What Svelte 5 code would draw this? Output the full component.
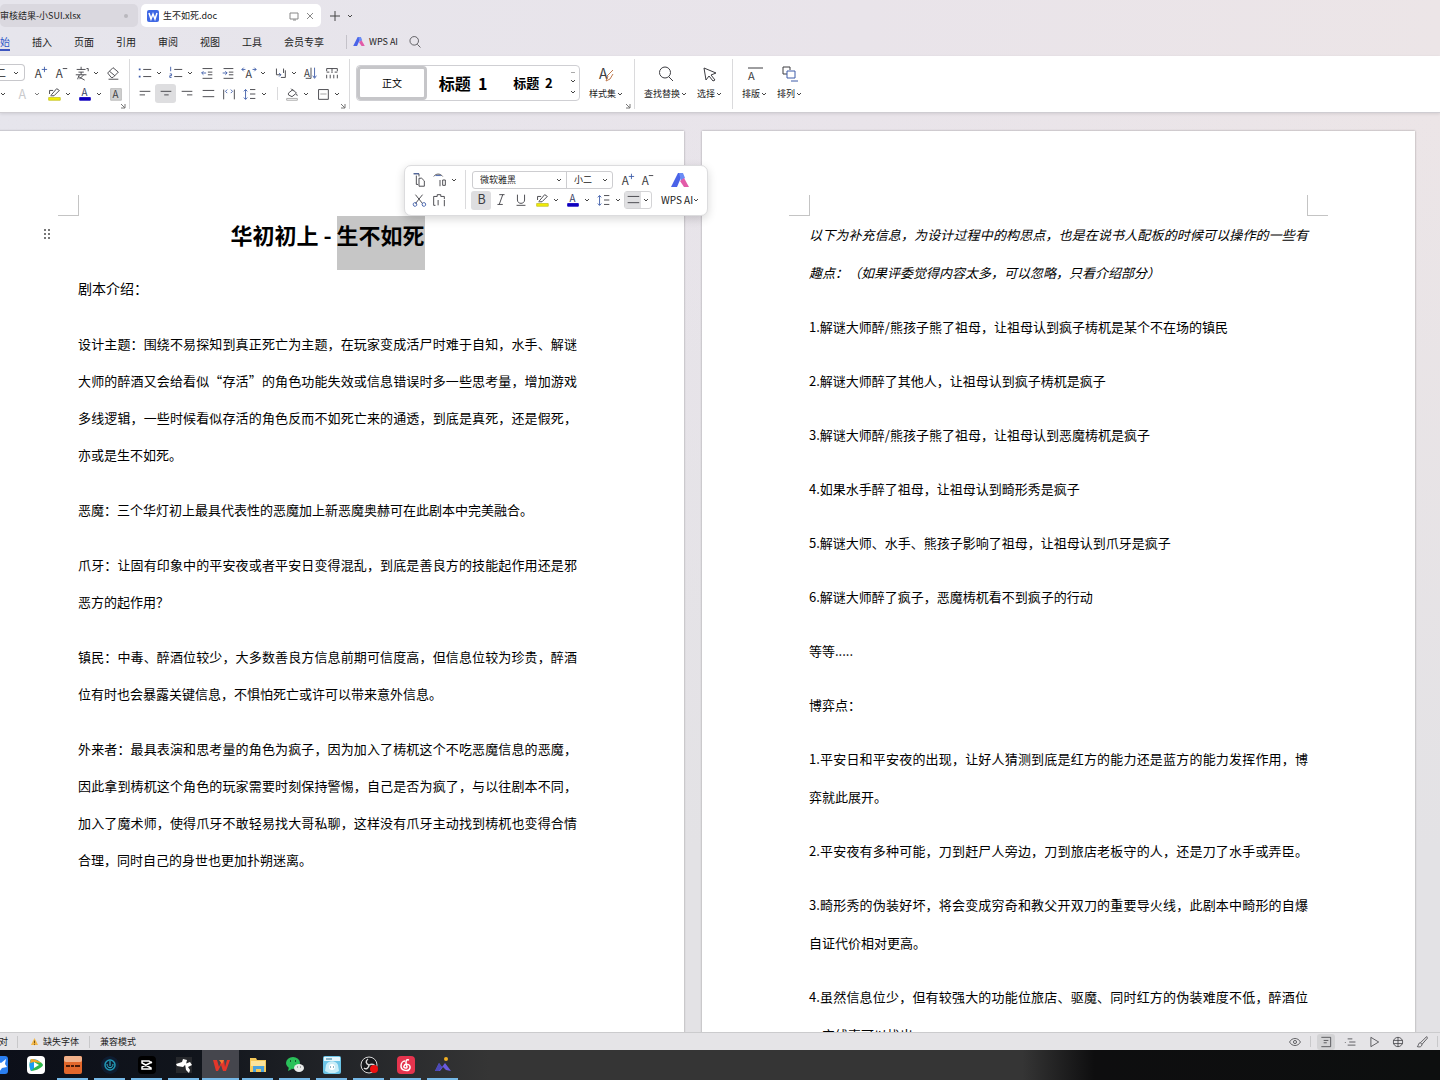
<script lang="ts">
  type Shape = { d?: string; s?: string; f?: string; w?: number; t?: string; x?: number; y?: number; size?: number };
  type Tool = { icon: string; label: string; drop?: boolean; on?: boolean; dim?: boolean; gap?: boolean };

  const blue = '#3c5aa8';

  // 18 x 18 line icons; entries with "t" are letters
  const icons: Record<string, Shape[]> = {
    grow: [{ t: 'A', x: 3, y: 15, size: 13 }, { d: 'M11 5h6M14 2v6', s: blue }],
    shrink: [{ t: 'A', x: 3, y: 15, size: 13 }, { d: 'M11 4h5' }],
    pinyin: [{ d: 'M8 2v3M3 5h10M5 8h6M2 11h12M8 8v3M6 11l-2 5M5 13l7 4M11 11l-5 5M14 4h2v3' }],
    eraser: [{ d: 'M3 9l6-6 6 5-6 6H7zM5 7l6 5M4 16h11' }],
    ghost: [{ t: 'A', x: 4, y: 15, size: 14, s: '#b5b5b8' }],
    marker: [{ d: 'M4 9V5h4M6 10l6-7 3 2-6 6H5' }, { d: 'M3 13h13v3H3z', f: '#f4f000', s: '#c9c630' }],
    color: [{ t: 'A', x: 5, y: 11, size: 11, s: '#3a3f66' }, { d: 'M3 13h12v3H3z', f: '#1000c0', s: '#1000c0' }],
    shade: [{ d: 'M3 3h12v13H3z', f: '#d2d2d2', s: '#b8b8b8' }, { t: 'A', x: 5, y: 14, size: 11 }],
    bullets: [{ d: 'M7 5h9M7 13h9' }, { d: 'M3 4v2M3 12v2', s: blue, w: 2 }],
    numbers: [{ d: 'M7 5h9M7 13h9' }, { d: 'M3 2v5M2 10h2v2H2v2h2', s: blue }],
    outdent: [{ d: 'M4 4h11M10 8h5M10 11h5M4 15h11' }, { d: 'M8 9H3M5 7L3 9l2 2', s: blue }],
    indent: [{ d: 'M4 4h11M10 8h5M10 11h5M4 15h11' }, { d: 'M3 9h5M6 7l2 2-2 2', s: blue }],
    scale: [{ t: 'A', x: 5, y: 15, size: 12 }, { d: 'M1 5h4M3 3L1 5l2 2M17 5h-4M15 3l2 2-2 2', s: blue }],
    wrap: [{ d: 'M5 4v7h5M13 4v5M10 14h5V6' }, { d: 'M8 9l2 2-2 2', s: blue }],
    sort: [{ t: 'A', x: 1, y: 14, size: 11 }, { d: 'M9 3v12M3 15h6' }, { d: 'M13 3v11M11 12l2 3 2-3', s: blue }],
    table: [{ d: 'M3 4h12M3 8h3M8 8h2M12 8h3M3 4v3M15 4v3M3 11v4M7 11v4M11 11v4M15 11v4M9 4v3' }],
    left: [{ d: 'M3 6h12M3 10h6' }],
    center: [{ d: 'M3 6h12M7 10h5' }],
    right: [{ d: 'M3 6h12M9 10h6' }],
    justify: [{ d: 'M3 5h13M3 12h13' }],
    spread: [{ d: 'M3 4v11M15 4v11' }, { d: 'M7 4L5 6l2 2M11 4l2 2-2 2', s: blue }],
    leading: [{ d: 'M9 4h6M9 9h6M9 14h6' }, { d: 'M4 4v11M2 6l2-2 2 2M2 13l2 2 2-2', s: blue }],
    bucket: [{ d: 'M5 8l5-4 4 4-5 4-4-2zM8 3l3 3M14 9l1 2' }, { d: 'M3 14h12v2H3z', s: '#a5a5a5', f: '#fff' }],
    border: [{ d: 'M4 4h11v11H4z' }, { d: 'M6 9h7', s: '#9a9a9a' }],
    copy: [{ d: 'M3 2h6v3M6 4v10h2M9 7h3l3 3v6H9z' }, { d: 'M3 2h6', s: blue }],
    brush: [{ d: 'M2 5c2-3 7-4 10 0M9 9v7M12 9h3v6h-3z' }, { d: 'M4 4h6', s: blue }],
    cut: [{ d: 'M5 3l8 10M13 3L5 13' }, { d: 'M4 12a2 2 0 1 0 1 4 2 2 0 0 0-1-4M14 12a2 2 0 1 0 1 4 2 2 0 0 0-1-4', s: blue }],
    paste: [{ d: 'M5 15H3V5h4V3h4v2h4v3M8 15V9M15 9v7' }],
    bold: [{ t: 'B', x: 5, y: 14, size: 14 }],
    italic: [{ d: 'M7 3h6M5 14h6M11 3L7 14' }],
    underline: [{ d: 'M5 3v6c0 5 8 5 8 0V3M4 15h10' }],
    search: [{ d: 'M8 2a5.500 5.500 0 1 0 0 11A5.500 5.500 0 0 0 8 2M12 12l4 4' }],
    styles: [{ t: 'A', x: 2, y: 14, size: 14 }, { d: 'M16 5l-6 6M11 11l-2 5 4-2 3-5', s: '#c07a50' }],
    select: [{ d: 'M3 3l12 5-5 2 4 5-2 1-4-5-3 4z' }],
    layout: [{ d: 'M2 3h15' }, { t: 'A', x: 2, y: 15, size: 11 }],
    arrange: [{ d: 'M6 9H2V2h7v3' }, { d: 'M6 6h8v7H6zM10 16h7', s: blue }],
    eye: [{ d: 'M2 9c3-6 11-6 14 0-3 6-11 6-14 0zM9 7a2 2 0 1 0 0 4 2 2 0 0 0 0-4' }],
    page: [{ d: 'M3 3h12v12H3M6 7h6M6 10h4' }],
    outline: [{ d: 'M6 5h6M8 9h8M6 13h10M3 9v1' }],
    play: [{ d: 'M5 3l10 6-10 6z' }],
    globe: [{ d: 'M9 3a6 6 0 1 0 0 12A6 6 0 0 0 9 3M3 7h12M3 11h12M9 3v12' }],
    pen: [{ d: 'M15 2l-8 8 2 2 7-8zM7 10c-3 0-2 3-4 5 3 1 6 0 6-3' }]
  };

  const menus = ['开始', '插入', '页面', '引用', '审阅', '视图', '工具', '会员专享'];

  const fontRows: Tool[][] = [
    [
      { icon: 'grow', label: '增大字号' },
      { icon: 'shrink', label: '减小字号' },
      { icon: 'pinyin', label: '拼音指南', drop: true },
      { icon: 'eraser', label: '清除格式' }
    ],
    [
      { icon: 'ghost', label: '文字效果', drop: true, dim: true },
      { icon: 'marker', label: '突出显示', drop: true },
      { icon: 'color', label: '字体颜色', drop: true },
      { icon: 'shade', label: '字符底纹' }
    ]
  ];

  const paraRows: Tool[][] = [
    [
      { icon: 'bullets', label: '项目符号', drop: true },
      { icon: 'numbers', label: '编号', drop: true },
      { icon: 'outdent', label: '减少缩进量' },
      { icon: 'indent', label: '增加缩进量' },
      { icon: 'scale', label: '字符缩放', drop: true },
      { icon: 'wrap', label: '换行', drop: true },
      { icon: 'sort', label: '排序' },
      { icon: 'table', label: '制表位' }
    ],
    [
      { icon: 'left', label: '左对齐' },
      { icon: 'center', label: '居中对齐', on: true },
      { icon: 'right', label: '右对齐' },
      { icon: 'justify', label: '两端对齐' },
      { icon: 'spread', label: '分散对齐' },
      { icon: 'leading', label: '行距', drop: true },
      { icon: 'bucket', label: '底纹颜色', drop: true, gap: true },
      { icon: 'border', label: '边框', drop: true }
    ]
  ];

  const bigTools = [
    [{ icon: 'search', label: '查找替换' }, { icon: 'select', label: '选择' }],
    [{ icon: 'layout', label: '排版' }, { icon: 'arrange', label: '排列' }]
  ];

  // A paragraph is a list of lines; every line but the last fills the column
  const leftText = [
    ['设计主题：围绕不易探知到真正死亡为主题，在玩家变成活尸时难于自知，水手、解谜', '大师的醉酒又会给看似“存活”的角色功能失效或信息错误时多一些思考量，增加游戏', '多线逻辑，一些时候看似存活的角色反而不如死亡来的通透，到底是真死，还是假死，', '亦或是生不如死。'],
    ['恶魔：三个华灯初上最具代表性的恶魔加上新恶魔奥赫可在此剧本中完美融合。'],
    ['爪牙：让固有印象中的平安夜或者平安日变得混乱，到底是善良方的技能起作用还是邪', '恶方的起作用？'],
    ['镇民：中毒、醉酒位较少，大多数善良方信息前期可信度高，但信息位较为珍贵，醉酒', '位有时也会暴露关键信息，不惧怕死亡或许可以带来意外信息。'],
    ['外来者：最具表演和思考量的角色为疯子，因为加入了梼杌这个不吃恶魔信息的恶魔，', '因此拿到梼杌这个角色的玩家需要时刻保持警惕，自己是否为疯了，与以往剧本不同，', '加入了魔术师，使得爪牙不敢轻易找大哥私聊，这样没有爪牙主动找到梼杌也变得合情', '合理，同时自己的身世也更加扑朔迷离。']
  ];

  const noteText = ['以下为补充信息，为设计过程中的构思点，也是在说书人配板的时候可以操作的一些有', '趣点：（如果评委觉得内容太多，可以忽略，只看介绍部分）'];

  const rightText = [
    ['1.解谜大师醉/熊孩子熊了祖母，让祖母认到疯子梼杌是某个不在场的镇民'],
    ['2.解谜大师醉了其他人，让祖母认到疯子梼杌是疯子'],
    ['3.解谜大师醉/熊孩子熊了祖母，让祖母认到恶魔梼杌是疯子'],
    ['4.如果水手醉了祖母，让祖母认到畸形秀是疯子'],
    ['5.解谜大师、水手、熊孩子影响了祖母，让祖母认到爪牙是疯子'],
    ['6.解谜大师醉了疯子，恶魔梼杌看不到疯子的行动'],
    ['等等.....'],
    ['博弈点：'],
    ['1.平安日和平安夜的出现，让好人猜测到底是红方的能力还是蓝方的能力发挥作用，博', '弈就此展开。'],
    ['2.平安夜有多种可能，刀到赶尸人旁边，刀到旅店老板守的人，还是刀了水手或弄臣。'],
    ['3.畸形秀的伪装好坏，将会变成穷奇和教父开双刀的重要导火线，此剧本中畸形的自爆', '自证代价相对更高。'],
    ['4.虽然信息位少，但有较强大的功能位旅店、驱魔、同时红方的伪装难度不低，醉酒位', '一定线索可以找出。']
  ];

  const apps = ['bird', 'video', 'orange', 'power', 'capcut', 'wing', 'wps', 'folder', 'wechat', 'anime', 'obs', 'music', 'peak'];
  const idle = ['bird', 'video'];
</script>

{#snippet icon(name: string)}
  <svg class="icon" viewBox="0 0 18 18" aria-hidden="true">
    {#each icons[name] as p}
      {#if p.t}
        <text x={p.x} y={p.y} font-size={p.size} fill={p.s ?? '#3d3d42'}>{p.t}</text>
      {:else}
        <path d={p.d} fill={p.f ?? 'none'} stroke={p.s ?? '#3c3c41'} stroke-width={p.w ?? 1} />
      {/if}
    {/each}
  </svg>
{/snippet}

{#snippet caret()}
  <svg class="caret" viewBox="0 0 6 6" aria-hidden="true"><path d="M1 2l2 2 2-2" fill="none" stroke="#444" /></svg>
{/snippet}

{#snippet tool(t: Tool)}
  <button class="tool" class:drop={t.drop} class:on={t.on} class:dim={t.dim} class:gap={t.gap} aria-label={t.label}>
    {@render icon(t.icon)}
    {#if t.drop}{@render caret()}{/if}
  </button>
{/snippet}

{#snippet aiLogo()}
  <svg class="ai" viewBox="0 0 18 14" aria-hidden="true">
    <path d="M7 0h5L6 14H0z" fill="#4a63e8" />
    <path d="M8 0h4l2 5-4 3z" fill="#6a8cf5" />
    <path d="M9 8l4-3 5 9h-5z" fill="#e25ba8" />
  </svg>
{/snippet}

{#snippet launcher()}
  <svg class="launcher" viewBox="0 0 6 6" aria-hidden="true"><path d="M1 1l4 4M5 1v4H1" fill="none" stroke="#777" /></svg>
{/snippet}

{#snippet paragraph(lines: string[])}
  <p>
    {#each lines as line, i}
      <span class="line" class:full={i < lines.length - 1 || line.length > 37}>{line}</span>
    {/each}
  </p>
{/snippet}

<div class="app">
  <header class="tabs">
    <div class="tab first"><span>审核结果-小SUI.xlsx</span><i class="dot"></i></div>
    <div class="tab active">
      <svg class="doc" viewBox="0 0 12 12" aria-hidden="true">
        <rect width="12" height="12" rx="2" fill="#3f68e4" />
        <path d="M2 3l2 6 2-5 2 5 2-6" fill="none" stroke="#fff" stroke-width="1.500" />
      </svg>
      <span class="name">生不如死.doc</span>
      <svg class="mini" viewBox="0 0 10 10" aria-hidden="true"><path d="M1 2h8v6H1zM4 9h3" fill="none" stroke="#888" /></svg>
      <button class="close" aria-label="关闭"><svg class="mini" viewBox="0 0 10 10"><path d="M2 2l6 6M8 2L2 8" fill="none" stroke="#888" /></svg></button>
    </div>
    <button class="add" aria-label="新建"><svg viewBox="0 0 12 12"><path d="M6 1v10M1 6h10" stroke="#444" /></svg></button>
    {@render caret()}
  </header>

  <nav class="menu">
    {#each menus as item, i}
      <a href="#top" class:current={i === 0}>{item}</a>
    {/each}
    <a href="#ai" class="wps">{@render aiLogo()}WPS AI</a>
    <button class="find" aria-label="搜索">{@render icon('search')}</button>
  </nav>

  <div class="ribbon">
    <div class="group font">
      <div class="row">
        <label class="size"><select aria-label="字号"><option>小二</option></select>{@render caret()}</label>
        {#each fontRows[0] as t}{@render tool(t)}{/each}
      </div>
      <div class="row">
        <button class="more" aria-label="更多">{@render caret()}</button>
        {#each fontRows[1] as t}{@render tool(t)}{/each}
      </div>
      {@render launcher()}
    </div>
    <div class="group para">
      {#each paraRows as row}
        <div class="row">
          {#each row as t}{@render tool(t)}{/each}
        </div>
      {/each}
      {@render launcher()}
    </div>
    <div class="group look">
      <div class="gallery">
        <button class="style normal">正文</button>
        <button class="style h1">标题&nbsp; 1</button>
        <button class="style h2">标题&nbsp; 2</button>
        <span class="scroll"><i></i>{@render caret()}{@render caret()}</span>
      </div>
      <button class="big">{@render icon('styles')}<span>样式集{@render caret()}</span></button>
      {@render launcher()}
    </div>
    {#each bigTools as set}
      <div class="group set">
        {#each set as t}
          <button class="big">{@render icon(t.icon)}<span>{t.label}{@render caret()}</span></button>
        {/each}
      </div>
    {/each}
  </div>

  <main class="workspace">
    <article class="page first-page">
      <i class="crop tl"></i><i class="crop tr"></i>
      <svg class="handle" viewBox="0 0 8 12" aria-hidden="true"><path d="M1 1h2M5 1h2M1 5h2M5 5h2M1 9h2M5 9h2" stroke="#777" stroke-width="2" /></svg>
      <h1>华初初上 - <mark>生不如死</mark></h1>
      <p class="intro">剧本介绍：</p>
      {#each leftText as lines}{@render paragraph(lines)}{/each}
    </article>

    <article class="page second-page">
      <i class="crop tl"></i><i class="crop tr"></i>
      <em>{@render paragraph(noteText)}</em>
      {#each rightText as lines}{@render paragraph(lines)}{/each}
    </article>

    <div class="float">
      <div class="clip">
        <div class="row">{@render tool({ icon: 'copy', label: '复制' })}{@render tool({ icon: 'brush', label: '格式刷', drop: true })}</div>
        <div class="row">{@render tool({ icon: 'cut', label: '剪切' })}{@render tool({ icon: 'paste', label: '粘贴' })}</div>
      </div>
      <div class="format">
        <div class="row">
          <div class="picks">
            <label class="face"><select aria-label="字体"><option>微软雅黑</option></select>{@render caret()}</label>
            <label class="pt"><select aria-label="字号"><option>小二</option></select>{@render caret()}</label>
          </div>
          {@render tool({ icon: 'grow', label: '增大字号' })}
          {@render tool({ icon: 'shrink', label: '减小字号' })}
        </div>
        <div class="row">
          {@render tool({ icon: 'bold', label: '加粗', on: true })}
          {@render tool({ icon: 'italic', label: '倾斜' })}
          {@render tool({ icon: 'underline', label: '下划线' })}
          {@render tool({ icon: 'marker', label: '突出显示', drop: true })}
          {@render tool({ icon: 'color', label: '字体颜色', drop: true })}
          {@render tool({ icon: 'leading', label: '行距', drop: true })}
          <button class="align" aria-label="对齐"><span>{@render icon('justify')}</span>{@render caret()}</button>
        </div>
      </div>
      <button class="assist">{@render aiLogo()}<span>WPS AI{@render caret()}</span></button>
    </div>
  </main>

  <footer class="status">
    <span class="check">校对</span>
    <span class="warn">
      <svg viewBox="0 0 10 10" aria-hidden="true"><path d="M5 1l4 8H1z" fill="#f3b84a" /><path d="M5 4v3M5 8v1" stroke="#6b4a10" /></svg>
      缺失字体
    </span>
    <span>兼容模式</span>
    <div class="views">
      <button aria-label="护眼模式">{@render icon('eye')}</button>
      <i class="bar"></i>
      <button class="on" aria-label="页面视图">{@render icon('page')}</button>
      <button aria-label="大纲">{@render icon('outline')}</button>
      <button aria-label="阅读">{@render icon('play')}</button>
      <button aria-label="Web版式">{@render icon('globe')}</button>
      <button aria-label="写作模式">{@render icon('pen')}</button>
      <i class="bar"></i>
    </div>
  </footer>

  <div class="taskbar">
    {#each apps as app}
      <button class="task" class:running={!idle.includes(app)} class:front={app === 'wps'} aria-label={app}>
        <svg viewBox="0 0 18 18">
          {#if app === 'bird'}
            <rect width="18" height="18" rx="3" fill="#2a7ef0" />
            <path d="M5 4l6 3 5-4-1 5 2 3-5 1-3 4-1-5-4-2z" fill="#fff" />
          {:else if app === 'video'}
            <rect width="18" height="18" rx="4" fill="#fff" />
            <path d="M4 3c5 0 12 4 12 6s-7 6-12 6c-2-4-2-8 0-12z" fill="#2fb84d" />
            <path d="M4 3c-2 4-2 8 0 12l3-3V6l5-1c-3-2-6-2-8-2z" fill="#1c9cf0" />
            <path d="M4 3c4 0 8 2 10 4L7 6l-4 1z" fill="#f5a623" />
            <path d="M7 6l5 3-5 3z" fill="#fff" />
          {:else if app === 'orange'}
            <rect width="18" height="18" rx="2" fill="#e2672b" />
            <rect width="18" height="6" rx="2" fill="#f0b08a" />
            <path d="M2 9h4v2H2zM7 9h3v2H7zM11 9h5v2h-5z" fill="#4a1a08" />
          {:else if app === 'power'}
            <circle cx="9" cy="9" r="9" fill="#0e1c30" />
            <circle cx="9" cy="9" r="5" fill="none" stroke="#1f97b5" stroke-width="1.500" />
            <path d="M9 5v5M6 8c0 5 6 5 6 0" fill="none" stroke="#35bfd6" />
          {:else if app === 'capcut'}
            <rect width="18" height="18" rx="4" fill="#000" />
            <path d="M14 7l-3-2H4v2l9 5v1H4v-2l10-5" fill="none" stroke="#fff" stroke-width="1.500" />
          {:else if app === 'wing'}
            <rect x="1" y="1" width="16" height="16" fill="#26282c" />
            <path d="M1 8l6-2 1-3 4 1-1 4-3 3-6-1zM10 8l5-2 2 3-4 2 2 3-1 3-3-3z" fill="#fff" />
          {:else if app === 'wps'}
            <path d="M1 4h4l2 7 3-7h2l1 7 2-7h3l-4 11h-3l-2-6-3 6H4z" fill="#e2362a" />
            <path d="M7 4h5l-2 4z" fill="#f37a30" />
          {:else if app === 'folder'}
            <path d="M1 2h6l1 2h9v12H1z" fill="#f5c95a" />
            <path d="M2 5h14v5H2z" fill="#fbe39a" />
            <path d="M4 10h11v6h-3v-3H7v3H4z" fill="#4ba3dc" />
          {:else if app === 'wechat'}
            <ellipse cx="7" cy="7" rx="7" ry="6" fill="#2ac15a" />
            <path d="M3 11l-1 4 4-2z" fill="#2ac15a" />
            <ellipse cx="13" cy="12" rx="5" ry="4" fill="#e9ebea" />
            <path d="M4 5h1M9 5h1" stroke="#155a2c" stroke-width="2" />
            <path d="M11 11h1M14 11h1" stroke="#666" />
          {:else if app === 'anime'}
            <rect width="18" height="18" rx="2" fill="#6cc4e6" />
            <path d="M1 1h16v4H1z" fill="#e4f6fc" />
            <path d="M3 9c2-5 10-5 12 0l1 6-4 2H6l-4-2z" fill="#c9edf8" />
            <circle cx="9" cy="11" r="3" fill="#fff" />
            <path d="M7 11h1M10 11h1M3 3h6" stroke="#24708f" />
          {:else if app === 'obs'}
            <circle cx="9" cy="9" r="8" fill="#16181b" stroke="#d7d7d7" />
            <path d="M9 9c-3-1-4-4-1-6M9 9c3-2 6 0 6 2M9 9c0 3-3 5-5 3" fill="none" stroke="#d7d7d7" stroke-width="1.500" />
            <circle cx="14" cy="13" r="4" fill="#ee1010" />
          {:else if app === 'music'}
            <rect width="18" height="18" rx="4" fill="#e5344e" />
            <path d="M12 4c-3-1-3 1-3 3l1 4c0 2-4 1-3-1 1-3 7-2 6 2-1 4-9 3-9-2 0-3 2-5 4-5" fill="none" stroke="#fff" stroke-width="1.500" />
          {:else}
            <path d="M1 15l4-8 3 4 3-4 6 8-5-1-3-3-3 4z" fill="#6a5be0" />
            <path d="M1 15l4-8 3 4-3 4z" fill="#4b49b8" />
            <circle cx="12" cy="3" r="2" fill="#f2b023" />
          {/if}
        </svg>
      </button>
    {/each}
  </div>
</div>

<style>
  :global(body) {
    margin: 0;
  }

  .app {
    height: 100vh;
    display: flex;
    flex-direction: column;
    overflow: hidden;
    font-family: 'Noto Sans CJK SC', sans-serif;
    font-size: 10px;
    line-height: 14px;
    color: #222;
    background: linear-gradient(90deg, #e6e5ec, #e9e4ea 60%, #ece5e7);
  }

  button,
  select {
    font: inherit;
    color: inherit;
    border: 0;
    padding: 0;
    background: none;
  }

  select {
    appearance: none;
    min-width: 0;
    flex: 1;
  }

  a {
    color: inherit;
    text-decoration: none;
  }

  svg {
    display: block;
    flex: none;
    overflow: visible;
  }

  .icon {
    width: 16px;
    height: 16px;
  }

  .caret {
    width: 6px;
    height: 6px;
  }

  /* Tabs */
  .tabs {
    display: flex;
    align-items: center;
    padding-top: 4px;
    font-size: 9px;
  }

  .tab {
    height: 23px;
    display: flex;
    align-items: center;
    border-radius: 5px;
    box-sizing: border-box;
  }

  .first {
    width: 138px;
    justify-content: space-between;
    padding-right: 10px;
    background: #dad8df;
  }

  .dot {
    width: 4px;
    height: 4px;
    border-radius: 50%;
    background: #b9b8bd;
  }

  .active {
    width: 180px;
    margin-left: 3px;
    padding: 0 6px;
    background: #fff;
  }

  .doc {
    width: 12px;
    height: 12px;
    margin-right: 4px;
  }

  .name {
    flex: 1;
  }

  .mini {
    width: 10px;
    height: 10px;
  }

  .close {
    margin-left: 6px;
  }

  .add {
    margin: 0 6px 0 8px;
  }

  .add svg {
    width: 12px;
    height: 12px;
  }

  /* Menu */
  .menu {
    height: 29px;
    display: flex;
    align-items: center;
    gap: 22px;
    margin-left: -10px;
  }

  .menu a {
    height: 18px;
    line-height: 18px;
    box-sizing: border-box;
  }

  .menu .current {
    color: #2d55c8;
    border-bottom: 2px solid #3c55c0;
  }

  .menu .wps {
    display: flex;
    align-items: center;
    gap: 4px;
    height: 14px;
    padding-left: 6px;
    border-left: 1px solid #c4c2c9;
    font-size: 9px;
  }

  .ai {
    width: 12px;
    height: 9px;
  }

  .find {
    margin-left: -12px;
  }

  .find .icon {
    width: 14px;
    height: 14px;
  }

  /* Ribbon */
  .ribbon {
    height: 56px;
    display: flex;
    flex: none;
    align-items: center;
    background: #fff;
    border-bottom: 1px solid #cfcdd2;
    box-shadow: 0 1px 3px rgba(0, 0, 0, 0.1);
  }

  .group {
    position: relative;
    height: 50px;
    box-sizing: border-box;
    border-right: 1px solid #dadadc;
    padding-top: 3px;
  }

  .row {
    display: flex;
    align-items: center;
    height: 21px;
  }

  .font {
    width: 130px;
  }

  .para {
    width: 220px;
    padding-left: 4px;
  }

  .launcher {
    position: absolute;
    right: 3px;
    bottom: 0;
    width: 6px;
    height: 6px;
  }

  .size {
    width: 25px;
    height: 17px;
    margin-right: 4px;
    padding-right: 5px;
    box-sizing: border-box;
    display: flex;
    align-items: center;
    border: 1px solid #c8c8cc;
    border-left: 0;
    border-radius: 0 4px 4px 0;
    overflow: hidden;
  }

  .size select {
    width: 14px;
    text-indent: -14px;
  }

  .more {
    width: 12px;
  }

  .tool {
    width: 21px;
    height: 19px;
    flex: none;
    display: flex;
    align-items: center;
    justify-content: center;
    gap: 3px;
  }

  .drop {
    width: 31px;
  }

  .on {
    background: #dedee0;
    border-radius: 3px;
  }

  .dim {
    opacity: 0.7;
  }

  .gap {
    margin-left: 7px;
    padding-left: 4px;
    box-sizing: content-box;
    background: linear-gradient(#dadadc, #dadadc) left center / 1px 13px no-repeat;
  }

  .look {
    display: flex;
    width: 285px;
    padding-left: 6px;
  }

  .gallery {
    height: 36px;
    width: 224px;
    box-sizing: border-box;
    display: flex;
    align-items: center;
    margin-top: 3px;
    border: 1px solid #cfcfd3;
    border-radius: 4px;
  }

  .style {
    flex: none;
    text-align: center;
    color: #000;
  }

  .normal {
    width: 70px;
    height: 34px;
    box-sizing: border-box;
    border: 3px solid #c6c6c9;
    border-radius: 4px;
  }

  .h1 {
    width: 72px;
    font-size: 16px;
    font-weight: 700;
  }

  .h2 {
    width: 68px;
    font-size: 13px;
    font-weight: 700;
  }

  .scroll {
    display: flex;
    flex: 1;
    flex-direction: column;
    align-items: center;
    gap: 5px;
  }

  .scroll i {
    width: 4px;
    height: 1px;
    background: #aaa;
  }

  .big {
    display: flex;
    flex-direction: column;
    align-items: center;
    gap: 4px;
    margin-top: 3px;
    font-size: 9px;
    height: 40px;
  }

  .big .icon {
    width: 18px;
    height: 18px;
  }

  .big span {
    display: flex;
    align-items: center;
    gap: 1px;
    white-space: nowrap;
  }

  .look .big {
    margin-left: 9px;
  }

  .set {
    display: flex;
    gap: 10px;
    padding-left: 9px;
    padding-right: 10px;
  }

  .set:last-child {
    border-right: 0;
  }

  /* Document */
  .workspace {
    position: relative;
    flex: 1;
    min-height: 0;
    display: flex;
    gap: 18px;
    margin-left: -29px;
    padding: 18px 25px 0 0;
    overflow: hidden;
    background: linear-gradient(180deg, transparent, #e3e2e5 80%);
  }

  .page {
    position: relative;
    flex: 1 1 0;
    min-width: 0;
    height: 1200px;
    box-sizing: border-box;
    padding: 85px 107px 0;
    background: #fff;
    box-shadow: 0 0 2px rgba(0, 0, 0, 0.35);
    font-size: 13px;
    color: #000;
  }

  .page p {
    margin: 0 0 18px;
    line-height: 37px;
  }

  .second-page p {
    margin-bottom: 16px;
    line-height: 38px;
  }

  .page .intro {
    font-size: 14px;
  }

  .line {
    display: block;
    white-space: nowrap;
  }

  .full {
    text-align-last: justify;
    white-space: normal;
  }

  h1 {
    display: flex;
    justify-content: center;
    height: 54px;
    margin: 0;
    font-size: 22px;
    line-height: 36px;
    white-space: pre;
  }

  mark {
    color: inherit;
    background: #c6c6c6;
  }

  .crop {
    position: absolute;
    top: 64px;
    width: 20px;
    height: 20px;
    border-bottom: 1px solid #c4c4c4;
  }

  .tl {
    left: 87px;
    border-right: 1px solid #c4c4c4;
  }

  .tr {
    right: 87px;
    border-left: 1px solid #c4c4c4;
  }

  .handle {
    position: absolute;
    left: 72px;
    top: 98px;
    width: 8px;
    height: 12px;
  }

  /* Selection toolbar */
  .float {
    position: absolute;
    left: 433px;
    top: 52px;
    width: 304px;
    height: 51px;
    box-sizing: border-box;
    display: flex;
    padding: 4px;
    background: #fff;
    border: 1px solid #dcdcde;
    border-radius: 7px;
    box-shadow: 0 3px 10px rgba(0, 0, 0, 0.16);
    font-size: 9px;
  }

  .float .row {
    height: 20px;
  }

  .clip {
    width: 56px;
    height: 39px;
    border-right: 1px solid #dadadc;
  }

  .format {
    padding-left: 5px;
  }

  .picks {
    display: flex;
    height: 18px;
    margin: 0 4px 0 1px;
    box-sizing: border-box;
    border: 1px solid #cdcdd0;
    border-radius: 3px;
  }

  .picks label {
    display: flex;
    align-items: center;
    padding: 0 4px 0 7px;
    box-sizing: border-box;
  }

  .face {
    width: 94px;
    border-right: 1px solid #cdcdd0;
  }

  .pt {
    width: 45px;
  }

  .float .tool {
    width: 20px;
  }

  .float .drop {
    width: 31px;
  }

  .align {
    display: flex;
    align-items: center;
    width: 28px;
    height: 18px;
    gap: 2px;
    box-sizing: border-box;
    border: 1px solid #d4d4d6;
    border-radius: 3px;
  }

  .align span {
    background: #e0e0e2;
  }

  .assist {
    display: flex;
    flex: 1;
    flex-direction: column;
    align-items: center;
    gap: 6px;
    font-size: 10px;
  }

  .assist .ai {
    width: 18px;
    height: 14px;
    margin-top: 3px;
  }

  .assist span {
    display: flex;
    align-items: center;
    white-space: nowrap;
  }

  /* Status bar */
  .status {
    height: 18px;
    flex: none;
    box-sizing: border-box;
    display: flex;
    align-items: center;
    border-top: 1px solid #cbcbcd;
    background: #e5e4e7;
    font-size: 9px;
    line-height: 12px;
  }

  .check {
    margin-left: -10px;
    padding-right: 9px;
    border-right: 1px solid #c8c8ca;
  }

  .warn {
    display: flex;
    align-items: center;
    gap: 4px;
    margin: 0 10px 0 12px;
    padding-right: 10px;
    border-right: 1px solid #c8c8ca;
  }

  .warn svg {
    width: 9px;
    height: 9px;
  }

  .views {
    display: flex;
    align-items: center;
    gap: 6px;
    margin-left: auto;
    padding-right: 2px;
  }

  .views button {
    width: 18px;
    height: 16px;
    display: grid;
    place-items: center;
  }

  .views .on {
    background: #d3d3d5;
  }

  .views .icon {
    width: 14px;
    height: 14px;
  }

  .bar {
    width: 1px;
    height: 11px;
    background: #c8c8ca;
  }

  /* Taskbar */
  .taskbar {
    height: 30px;
    flex: none;
    display: flex;
    background: linear-gradient(90deg, #0c0f19 0%, #11151c 14%, #353535 34%, #353535 71%, #0e0e0f 76%, #0d0f0f 100%);
  }

  .task {
    position: relative;
    width: 37px;
    display: grid;
    place-items: center;
  }

  .task:first-child {
    margin-left: -20px;
  }

  .task svg {
    width: 18px;
    height: 18px;
  }

  .running::after {
    content: '';
    position: absolute;
    left: 3px;
    right: 3px;
    bottom: 0;
    height: 2px;
    background: #76b9e8;
  }

  .front {
    background: #45464d;
  }

  .front::after {
    left: 0;
    right: 0;
  }
</style>
